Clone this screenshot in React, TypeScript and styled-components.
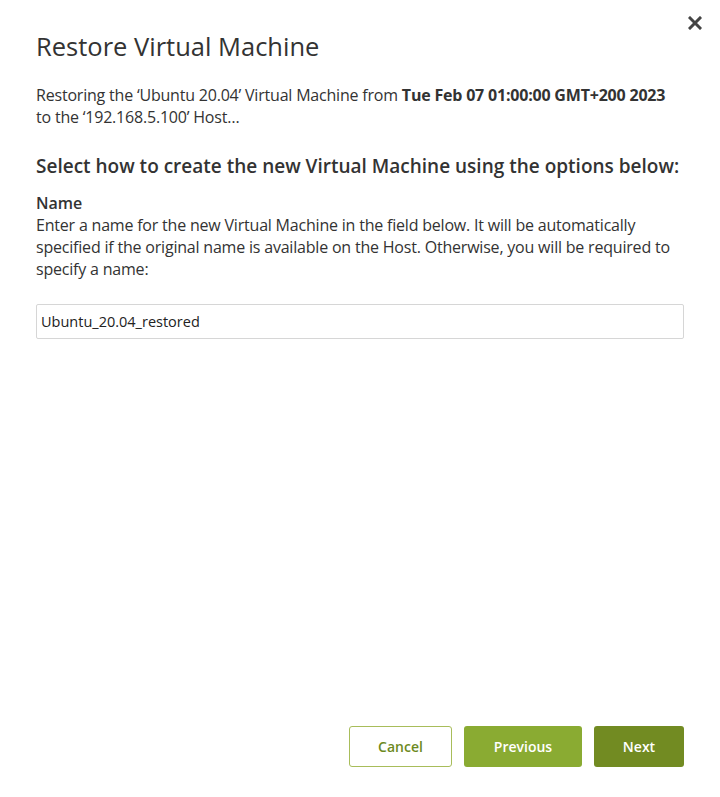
import React from "react";
import styled, { createGlobalStyle } from "styled-components";

const Global = createGlobalStyle`
  html, body { margin: 0; padding: 0; background: #fff; }
  body { font-family: "Open Sans", "Noto Sans", sans-serif; color: #333; }
`;

const Dialog = styled.div`
  position: relative;
  width: 720px;
  height: 797px;
  box-sizing: border-box;
  padding: 28px 36px 30px 36px;
  display: flex;
  flex-direction: column;
`;

const Close = styled.button`
  position: absolute;
  top: 12px;
  right: 14px;
  border: 0;
  background: none;
  padding: 4px;
  cursor: pointer;
  display: flex;
`;

const Title = styled.h1`
  margin: 0 0 20px 0;
  font-size: 25.5px;
  font-weight: 500;
  line-height: 36px;
  color: #333;
`;

const Text = styled.p<{ $mb?: number }>`
  margin: 0 0 ${(p) => p.$mb ?? 0}px 0;
  font-size: 16px;
  line-height: 22px;
  letter-spacing: -0.2px;
`;

const SubTitle = styled.h2`
  margin: 0 0 13px 0;
  font-size: 19px;
  font-weight: 600;
  line-height: 26px;
  color: #333;
`;

const Label = styled.div`
  font-size: 16px;
  font-weight: 600;
  line-height: 22px;
`;

const Input = styled.input`
  margin-top: 24px;
  height: 35px;
  box-sizing: border-box;
  width: 100%;
  border: 1px solid #d6d6d6;
  border-radius: 2px;
  padding: 0 4px;
  font-family: inherit;
  font-size: 14.5px;
  color: #222;
  outline: none;
`;

const Footer = styled.div`
  margin-top: auto;
  display: flex;
  justify-content: flex-end;
  gap: 12px;
`;

const Btn = styled.button<{ $kind: "outline" | "light" | "dark"; $w: number }>`
  width: ${(p) => p.$w}px;
  height: 41px;
  border-radius: 3px;
  font-family: inherit;
  font-size: 14px;
  font-weight: 600;
  cursor: pointer;
  border: 1px solid ${(p) => (p.$kind === "outline" ? "#a8bd5a" : "transparent")};
  background: ${(p) => (p.$kind === "outline" ? "#fff" : p.$kind === "light" ? "#8aab32" : "#728b22")};
  color: ${(p) => (p.$kind === "outline" ? "#6d8a1f" : "#fff")};
`;

export default function App() {
  return (
    <>
      <Global />
      <Dialog>
        <Close aria-label="close">
          <svg width="14" height="14" viewBox="0 0 14 14">
            <path d="M2 2L12 12M12 2L2 12" stroke="#444" strokeWidth="3" strokeLinecap="square" />
          </svg>
        </Close>
        <Title>Restore Virtual Machine</Title>
        <Text $mb={25}>
          Restoring the ‘Ubuntu 20.04’ Virtual Machine from <b>Tue Feb 07 01:00:00 GMT+200 2023</b>
          <br />
          to the ‘192.168.5.100’ Host…
        </Text>
        <SubTitle>Select how to create the new Virtual Machine using the options below:</SubTitle>
        <Label>Name</Label>
        <Text>
          Enter a name for the new Virtual Machine in the field below. It will be automatically specified if the
          original name is available on the Host. Otherwise, you will be required to specify a name:
        </Text>
        <Input defaultValue="Ubuntu_20.04_restored" />
        <Footer>
          <Btn $kind="outline" $w={103}>Cancel</Btn>
          <Btn $kind="light" $w={118}>Previous</Btn>
          <Btn $kind="dark" $w={90}>Next</Btn>
        </Footer>
      </Dialog>
    </>
  );
}
